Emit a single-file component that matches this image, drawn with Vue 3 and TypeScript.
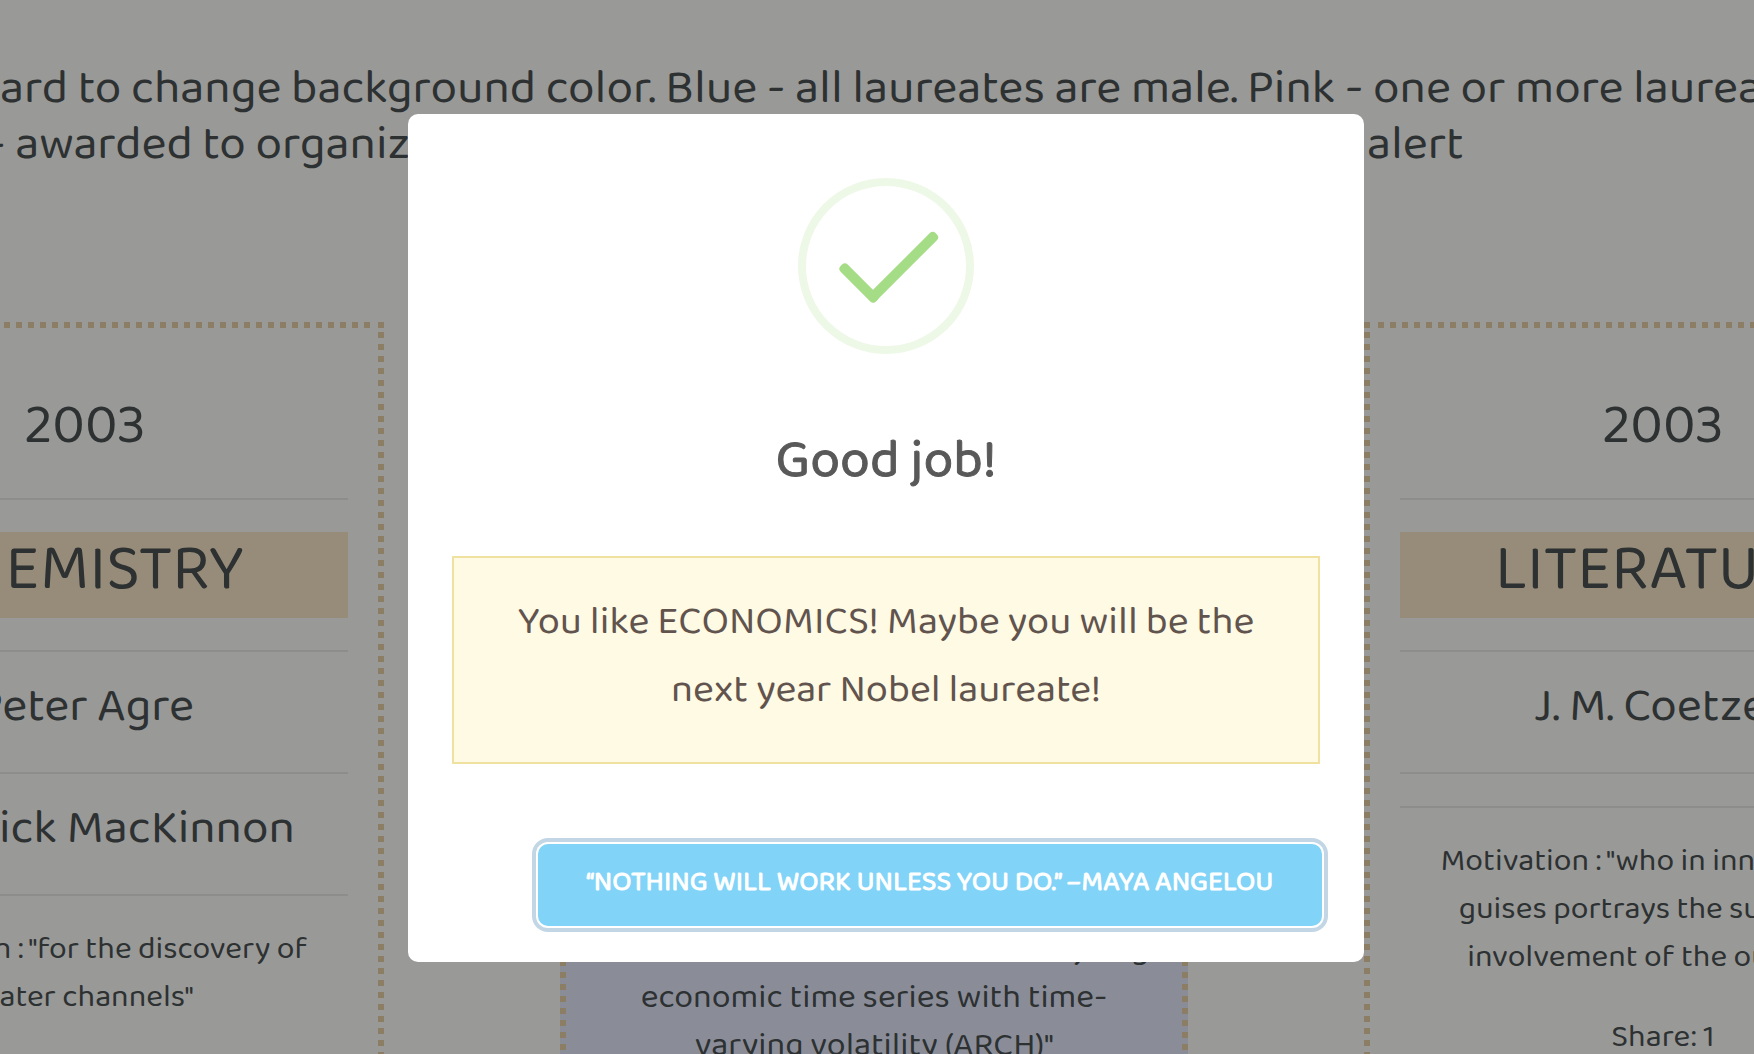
<script setup lang="ts">
interface Laureate {
  year: string
  category: string
  names: string[]
  motivation: string[]
  share?: string
  active?: boolean
}

const laureates: Laureate[] = [
  {
    year: '2003',
    category: 'CHEMISTRY',
    names: ['Peter Agre', 'Roderick MacKinnon'],
    motivation: ['Motivation : "for the discovery of', 'water channels"'],
  },
  {
    year: '2003',
    category: 'ECONOMICS',
    names: ['Robert F. Engle III', ''],
    motivation: ['Motivation : "for methods of analyzing', 'economic time series with time-', 'varying volatility (ARCH)"'],
    active: true,
  },
  {
    year: '2003',
    category: 'LITERATURE',
    names: ['J. M. Coetzee', ''],
    motivation: ['Motivation : "who in innumerable', 'guises portrays the surprising', 'involvement of the outsider"'],
    share: 'Share: 1',
  },
]
</script>

<template>
  <main class="page">
    <header class="intro">
      <p class="intro-line">ard to change background color. Blue - all laureates are male. Pink - one or more laureates</p>
      <p class="intro-line intro-second"><span class="intro-start">- awarded to organizations</span><span>alert</span></p>
    </header>

    <section class="cards">
      <article v-for="item in laureates" :key="item.category" class="card" :class="{ active: item.active }">
        <h2 class="year">{{ item.year }}</h2>
        <hr />
        <h1 class="category">{{ item.category }}</h1>
        <template v-for="(name, i) in item.names" :key="i">
          <hr />
          <h3 v-if="name" class="name">{{ name }}</h3>
        </template>
        <hr />
        <p class="motivation"><span v-for="line in item.motivation" :key="line">{{ line }}</span></p>
        <p v-if="item.share" class="motivation share"><span>{{ item.share }}</span></p>
      </article>
    </section>

    <div class="overlay">
      <div class="modal" role="dialog" aria-modal="true" aria-labelledby="modal-title">
        <svg class="check" viewBox="0 0 176 176" aria-hidden="true">
          <circle cx="88" cy="88" r="84" fill="none" stroke="#a5dc86" stroke-opacity="0.2" stroke-width="8" />
          <g fill="#a5dc86">
            <rect x="36" y="100" width="50" height="10" rx="4" transform="rotate(45 61 105)" />
            <rect x="58" y="84" width="94" height="10" rx="4" transform="rotate(-45 105 89)" />
          </g>
        </svg>
        <h2 id="modal-title" class="title">Good job!</h2>
        <p class="message">You like ECONOMICS! Maybe you will be the<br />next year Nobel laureate!</p>
        <div class="footer">
          <button type="button" class="confirm">“NOTHING WILL WORK UNLESS YOU DO.” –MAYA ANGELOU</button>
        </div>
      </div>
    </div>
  </main>
</template>

<style>
body {
  margin: 0;
  background: #fffffc;
}
</style>

<style scoped>
.page {
  height: 100vh;
  overflow: hidden;
  color: #4b5254;
  font-family: 'Baloo 2', Lato, sans-serif;
}

h1,
h2,
h3,
p {
  margin: 0;
  font-weight: 400;
}

.intro {
  padding-top: 61px;
  height: 262px;
  box-sizing: border-box;
}

.intro-line {
  font-size: 48px;
  line-height: 56px;
  white-space: nowrap;
}

.intro-second {
  display: flex;
}

.intro-start {
  flex: 0 0 calc(78% + 12px);
  margin-left: -13px;
}

.cards {
  display: flex;
  justify-content: center;
  align-items: flex-start;
  gap: 176px;
  padding: 60px 6px 0 0;
}

.card {
  --dot: #e8d2a7;
  flex: 0 0 598px;
  box-sizing: border-box;
  padding: 71px 36px 36px;
  min-height: 900px;
  text-align: center;
  background:
    linear-gradient(var(--dot), var(--dot)) 0 0 / 6px 6px no-repeat,
    linear-gradient(var(--dot), var(--dot)) 100% 0 / 6px 6px no-repeat,
    repeating-linear-gradient(to right, var(--dot) 0 6px, transparent 6px 12px) 14px 0 / calc(100% - 28px) 6px no-repeat,
    repeating-linear-gradient(var(--dot) 0 6px, transparent 6px 12px) 0 10px / 6px calc(100% - 10px) no-repeat,
    repeating-linear-gradient(var(--dot) 0 6px, transparent 6px 12px) 100% 10px / 6px calc(100% - 10px) no-repeat;
}

.card.active {
  flex-basis: 628px;
  margin-top: 88px;
  background-color: #e6ebfd;
}

.card hr {
  height: 2px;
  margin: 32px 0;
  border: 0;
  background: rgba(0, 0, 0, 0.08);
}

.year {
  padding-bottom: 5px;
  font-size: 56px;
  line-height: 68px;
}

.category {
  height: 86px;
  font-size: 64px;
  line-height: 78px;
  white-space: nowrap;
  background: #fce9ca;
}

.name {
  padding-bottom: 10px;
  font-size: 48px;
  line-height: 46px;
  white-space: nowrap;
}

.motivation {
  margin-top: -2px;
  font-size: 32px;
  line-height: 48px;
}

.share {
  margin-top: 32px;
}

.active .motivation {
  font-size: 34px;
}

.motivation span {
  display: block;
  white-space: nowrap;
}

.overlay {
  position: fixed;
  inset: 0;
  display: flex;
  justify-content: center;
  align-items: flex-start;
  padding: 114px 0 0 18px;
  background: rgba(0, 0, 0, 0.4);
}

.modal {
  width: 100%;
  max-width: 956px;
  box-sizing: border-box;
  padding: 64px 42px 36px;
  border-radius: 10px;
  background: #fff;
  text-align: center;
}

.check {
  display: block;
  width: 176px;
  height: 176px;
  margin: 0 auto;
}

.title {
  margin: 73px 0 61px;
  color: #595959;
  font-size: 54px;
  line-height: 68px;
  -webkit-text-stroke: 1px currentColor;
}

.message {
  margin: 0 2px;
  padding: 30px 32px 38px;
  border: 2px solid #f0e1a1;
  background: #fefae3;
  color: #61534e;
  font-size: 40px;
  line-height: 68px;
}

.footer {
  display: flex;
  justify-content: flex-end;
  margin-top: 80px;
}

.confirm {
  min-width: 784px;
  height: 82px;
  padding: 0 46px 6px;
  border: 0;
  border-radius: 10px;
  background: #81d3f8;
  box-shadow: 0 0 0 2px #fff, 0 0 0 6px #c2d6e5;
  color: #fff;
  font-family: inherit;
  font-size: 28px;
  font-weight: 400;
  -webkit-text-stroke: 1px currentColor;
  white-space: nowrap;
}
</style>
